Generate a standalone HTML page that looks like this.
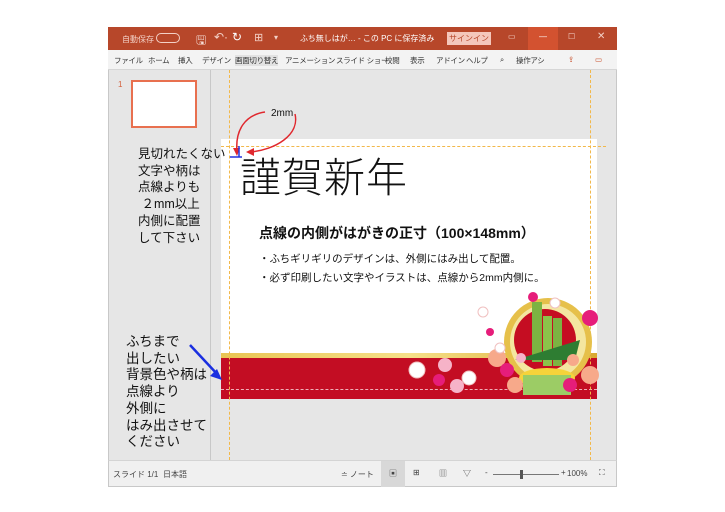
<!DOCTYPE html>
<html><head><meta charset="utf-8"><style>
*{margin:0;padding:0;box-sizing:border-box}
body{width:725px;height:512px;background:#fff;position:relative;overflow:hidden;font-family:"Liberation Sans","Noto Sans CJK JP",sans-serif}
.a{position:absolute}
.tb{left:108px;top:27px;width:509px;height:23px;background:#b7472a;color:#f3d0c6;font-size:8px}
.rb{left:108px;top:50px;width:509px;height:20px;background:#f3f3f3;border-bottom:1px solid #d6d6d6;font-size:7.5px;color:#333;letter-spacing:-0.3px}
.rb span{position:absolute;top:5px;white-space:nowrap}
.ca{left:108px;top:70px;width:509px;height:390px;background:#e6e6e6;border-left:1px solid #c8c8c8;border-right:1px solid #c8c8c8}
.sb{left:108px;top:460px;width:509px;height:27px;background:#f0f0f0;border-top:1px solid #d4d4d4;font-size:8px;color:#444;border-left:1px solid #c8c8c8;border-right:1px solid #c8c8c8;border-bottom:1px solid #c8c8c8}
.note{line-height:16.7px;color:#111;white-space:nowrap}
</style></head><body>
<div class="a tb">
<span class="a" style="left:14px;top:7px">自動保存</span>
<span class="a" style="left:48px;top:6px;width:24px;height:10px;border:1px solid #f3d0c6;border-radius:5px"></span>
<span class="a" style="left:88px;top:4px;font-size:12px;color:#f6ddd6">🖫</span>
<span class="a" style="left:106px;top:3px;font-size:12px">↶·</span>
<span class="a" style="left:124px;top:3px;font-size:12px;color:#fff">↻</span>
<span class="a" style="left:146px;top:4px;font-size:11px">⊞</span>
<span class="a" style="left:166px;top:6px">▾</span>
<span class="a" style="left:192px;top:6px;color:#fff">ふち無しはが… - この PC に保存済み</span>
<span class="a" style="left:339px;top:5px;width:44px;height:13px;background:#f4c7bb;color:#b7472a;text-align:center;line-height:13px">サインイン</span>
<span class="a" style="left:400px;top:5px">▭</span>
<span class="a" style="left:420px;top:0;width:30px;height:23px;background:#d35230"></span>
<span class="a" style="left:431px;top:5px;color:#fff">—</span>
<span class="a" style="left:460px;top:5px">☐</span>
<span class="a" style="left:489px;top:4px;font-size:10px">✕</span>
</div>
<div class="a rb">
<span style="left:6px">ファイル</span><span style="left:40px">ホーム</span><span style="left:70px">挿入</span><span style="left:94px">デザイン</span>
<span style="left:127px;background:#e2e2e2">画面切り替え</span><span style="left:177px">アニメーション</span><span style="left:228px">スライド ショー</span>
<span style="left:277px">校閲</span><span style="left:302px">表示</span><span style="left:328px">アドイン</span><span style="left:358px">ヘルプ</span>
<span style="left:392px">⌕</span><span style="left:408px">操作アシ</span>
<span style="left:460px;color:#c8502c">⇪</span><span style="left:487px;color:#c8502c">▭</span>
</div>
<div class="a ca"></div>
<div class="a" style="left:210px;top:70px;width:1px;height:390px;background:#c8c8c8"></div>
<div class="a" style="left:118px;top:80px;font-size:8px;color:#d4603c">1</div>
<div class="a" style="left:131px;top:80px;width:66px;height:48px;background:#fff;border:2px solid #e8704f"></div>
<div class="a" style="left:221px;top:139px;width:376px;height:260px;background:#fff"></div>
<div class="a" style="left:221px;top:353px;width:376px;height:5px;background:linear-gradient(90deg,#e9c453,#f6e08a,#d9a930)"></div>
<div class="a" style="left:221px;top:358px;width:376px;height:41px;background:#c30d23"></div>
<div class="a" style="left:221px;top:389px;width:376px;border-top:1px dashed #f0b0b8"></div>
<div class="a" style="left:229px;top:70px;height:390px;border-left:1px dashed #f2b84a"></div>
<div class="a" style="left:590px;top:70px;height:390px;border-left:1px dashed #f2b84a"></div>
<div class="a" style="left:221px;top:146px;width:385px;border-top:1px dashed #f2b84a"></div>
<div class="a" style="left:240px;top:153px;font-size:41px;font-weight:300;color:#111;line-height:50px;letter-spacing:1px">謹賀新年</div>
<div class="a" style="left:259px;top:223px;font-size:14px;font-weight:bold;color:#111">点線の内側がはがきの正寸（100×148mm）</div>
<div class="a" style="left:259px;top:250px;font-size:10.5px;color:#111;line-height:19px">・ふちギリギリのデザインは、外側にはみ出して配置。<br>・必ず印刷したい文字やイラストは、点線から2mm内側に。</div>
<svg class="a" style="left:395px;top:290px" width="210" height="110">
<circle cx="153" cy="52" r="44" fill="#e6c04a"/><circle cx="153" cy="52" r="38" fill="#f4e6a0"/>
<circle cx="150" cy="50" r="31" fill="#c50d22"/>
<rect x="137" y="12" width="10" height="60" fill="#7cb342"/><rect x="148" y="26" width="9" height="50" fill="#8bc34a"/><rect x="158" y="28" width="9" height="48" fill="#7cb342"/>
<path d="M120 70 L185 50 L180 70 Z" fill="#2e7d32"/>
<ellipse cx="152" cy="88" rx="28" ry="10" fill="#f6d33a"/>
<rect x="128" y="85" width="48" height="20" fill="#9ccc65"/>
<g fill="#f7a98a"><circle cx="102" cy="68" r="9"/><circle cx="195" cy="85" r="9"/><circle cx="120" cy="95" r="8"/><circle cx="178" cy="70" r="6"/></g>
<g fill="#e61d7a"><circle cx="195" cy="28" r="8"/><circle cx="112" cy="80" r="7"/><circle cx="175" cy="95" r="7"/><circle cx="44" cy="90" r="6"/><circle cx="138" cy="7" r="5"/><circle cx="95" cy="42" r="4"/></g>
<g fill="#fff" stroke="#f0c0c0"><circle cx="22" cy="80" r="8"/><circle cx="74" cy="88" r="7"/><circle cx="105" cy="58" r="5"/><circle cx="160" cy="13" r="5"/><circle cx="88" cy="22" r="5"/></g>
<g fill="#f6b3c8"><circle cx="50" cy="75" r="7"/><circle cx="62" cy="96" r="7"/><circle cx="126" cy="68" r="5"/></g>
</svg>
<svg class="a" style="left:225px;top:100px" width="120" height="70">
<path d="M40 12 C20 15 10 30 12 52" stroke="#e0282e" stroke-width="1.5" fill="none"/>
<path d="M8 48 L12 56 L15 48" fill="#e0282e"/>
<path d="M70 14 C75 35 50 50 25 52" stroke="#e0282e" stroke-width="1.5" fill="none"/>
<path d="M29 48 L21 52 L29 56" fill="#e0282e"/>
<path d="M5 57 H17 M14 57 V46" stroke="#2233dd" stroke-width="1.5"/>
</svg>
<div class="a" style="left:271px;top:108px;font-size:10px;color:#111">2mm</div>
<svg class="a" style="left:180px;top:340px" width="45" height="45"><path d="M10 5 L38 35" stroke="#1a2fe0" stroke-width="2.5"/><path d="M42 40 L30 36 L37 29 Z" fill="#1a2fe0"/></svg>
<div class="a note" style="left:138px;top:146px;font-size:12.5px">見切れたくない<br>文字や柄は<br>点線よりも<br>&nbsp;２mm以上<br>内側に配置<br>して下さい</div>
<div class="a note" style="left:126px;top:334px;font-size:13.5px">ふちまで<br>出したい<br>背景色や柄は<br>点線より<br>外側に<br>はみ出させて<br>ください</div>
<div class="a sb">
<span class="a" style="left:4px;top:8px">スライド 1/1</span><span class="a" style="left:54px;top:8px">日本語</span>
<span class="a" style="left:232px;top:8px">≐ ノート</span>
<span class="a" style="left:272px;top:0;width:24px;height:26px;background:#d8d8d8"></span>
<span class="a" style="left:280px;top:7px">▣</span><span class="a" style="left:304px;top:7px">⊞</span><span class="a" style="left:330px;top:7px">▥</span><span class="a" style="left:354px;top:7px">▽</span>
<span class="a" style="left:376px;top:7px">-</span><span class="a" style="left:384px;top:13px;width:66px;height:1px;background:#777"></span><span class="a" style="left:411px;top:9px;width:3px;height:9px;background:#555"></span>
<span class="a" style="left:452px;top:7px">+</span><span class="a" style="left:458px;top:8px">100%</span><span class="a" style="left:490px;top:7px">⛶</span>
</div>
</body></html>
